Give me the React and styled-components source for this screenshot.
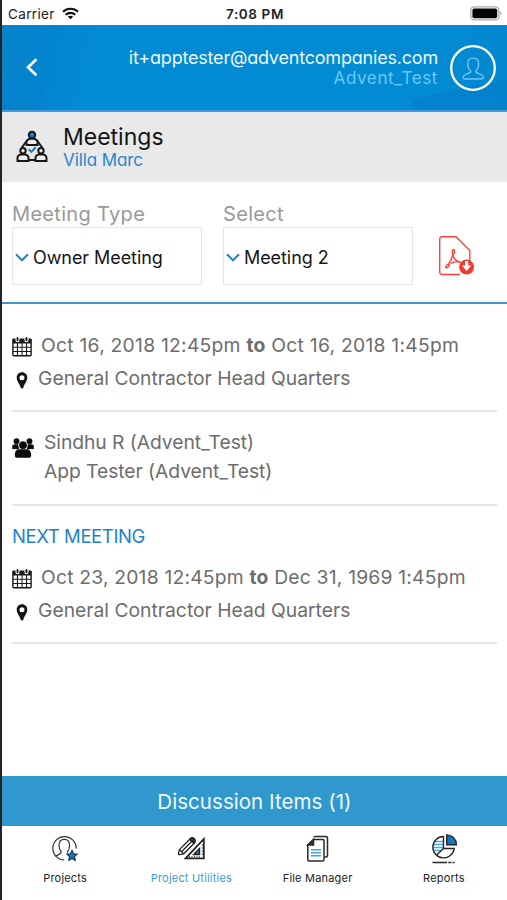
import React from "react";
import styled, { createGlobalStyle } from "styled-components";

const GlobalStyle = createGlobalStyle`
  * { box-sizing: border-box; }
  body { margin: 0; background: #fff; font-family: Inter, "Liberation Sans", sans-serif; }
`;

const Screen = styled.div`
  width: 507px;
  height: 900px;
  display: flex;
  flex-direction: column;
  overflow: hidden;
  background: #fff;
  border-left: 2px solid #232327;
`;

const StatusBar = styled.div`
  height: 25px;
  flex: none;
  display: grid;
  grid-template-columns: 1fr auto 1fr;
  align-items: center;
  padding: 2px 5px 0 6px;
  font-size: 13.5px;
  color: #222;
`;
const Carrier = styled.div`
  display: flex;
  align-items: center;
  gap: 7px;
  letter-spacing: 0.35px;
`;
const Clock = styled.div`
  font-weight: 600;
  letter-spacing: 0.6px;
`;
const BatterySlot = styled.div`
  display: flex;
  justify-content: flex-end;
`;

const Header = styled.header`
  height: 87px;
  flex: none;
  display: flex;
  align-items: center;
  padding: 0 11px 0 22px;
  border-bottom: 2px solid #429bd6;
  background:
    linear-gradient(168deg, transparent 45%, rgba(0, 100, 185, 0.22) 48%, rgba(0, 110, 195, 0.16)) 100% 100% / 94px 38px no-repeat,
    repeating-linear-gradient(105deg, rgba(0, 90, 190, 0.05) 0 3px, transparent 5px 9px) 0 0 / 45px 100% no-repeat,
    linear-gradient(100deg, #0683cb 0%, #0285cf 10%, #028bd3 19%, #028bd3 85%, #0288cf 100%);
`;
const Account = styled.div`
  margin-left: auto;
  margin-right: 12px;
  text-align: right;
  font-feature-settings: "cv11", "ss03";
`;
const Email = styled.div`
  font-size: 18px;
  line-height: 20px;
  letter-spacing: -0.2px;
  color: #eaf8ff;
`;
const Company = styled.div`
  font-size: 17.2px;
  line-height: 19px;
  letter-spacing: 0.5px;
  color: #65c9fb;
`;

const TitleBar = styled.section`
  height: 70px;
  flex: none;
  display: flex;
  padding: 0 0 0 14px;
  background: #e9e9e9;
`;
const TitleIcon = styled.div`
  padding-top: 18px;
  width: 47px;
`;
const TitleText = styled.div`
  padding-top: 11px;
  font-feature-settings: "cv11";
`;
const Title = styled.h1`
  margin: 0;
  font-size: 23px;
  line-height: 28px;
  font-weight: 400;
  color: #141414;
`;
const Subtitle = styled.div`
  font-size: 17px;
  line-height: 18px;
  letter-spacing: -0.1px;
  color: #2787cc;
`;

const Filters = styled.section`
  height: 122px;
  flex: none;
  display: flex;
  gap: 21px;
  padding: 19px 0 0 10px;
  border-bottom: 2px solid #4697cb;
`;
const Field = styled.div`
  width: 190px;
`;
const Label = styled.div`
  font-size: 20px;
  line-height: 26px;
  letter-spacing: 0.32px;
  color: #999;
`;
const SelectBox = styled.div`
  height: 58px;
  display: flex;
  align-items: center;
  gap: 4px;
  padding: 2px 0 0 2px;
  border: 1px solid #e6e6e6;
  font-size: 18px;
  letter-spacing: -0.07px;
  color: #161616;
`;
const PdfSlot = styled.div`
  padding: 34px 0 0 4px;
`;

const Details = styled.main`
  flex: 1;
  padding: 0 10px;
  color: #6d6d6d;
  font-size: 19.3px;
`;
const Block = styled.section`
  height: ${(p) => p.$height};
  padding-top: ${(p) => p.$top};
  border-bottom: 2px solid #e5e5e5;
`;
const Line = styled.div`
  display: flex;
  height: ${(p) => p.$height};
  line-height: ${(p) => p.$height};
`;
const Glyph = styled.div`
  width: ${(p) => p.$width};
  flex: none;
  display: flex;
  align-items: center;
  padding-left: ${(p) => p.$inset || "0"};
  padding-top: ${(p) => p.$drop || "0"};
`;
const Copy = styled.span`
  white-space: pre;
  letter-spacing: ${(p) => p.$track || "0"};
`;
const To = styled.b`
  font-weight: 700;
`;
const Heading = styled.h2`
  margin: 0;
  height: 38px;
  font-weight: 400;
  font-size: 18.5px;
  line-height: 26px;
  letter-spacing: -0.4px;
  color: #1d83c8;
`;

const DiscussionButton = styled.button`
  height: 50px;
  flex: none;
  border: 0;
  padding: 0;
  background: #3198cd;
  color: #eefaff;
  font-family: inherit;
  font-size: 20.5px;
  letter-spacing: 0.05px;
`;

const TabBar = styled.nav`
  height: 74px;
  flex: none;
  display: grid;
  grid-template-columns: repeat(4, 1fr);
`;
const Tab = styled.div`
  display: flex;
  flex-direction: column;
  align-items: center;
  padding-top: 8px;
  font-size: 11px;
  line-height: 14px;
  letter-spacing: 0.2px;
  color: ${(p) => (p.$active ? "#3b9bd8" : "#222")};
  svg { margin-bottom: 7px; }
`;

const Wifi = () => (
  <svg width="17" height="13" viewBox="0 0 17 13" fill="none" stroke="#111" strokeWidth="2.1">
    <path d="M1 4.8C5 .7 12 .7 16 4.8" />
    <path d="M3.7 7.7c2.7-2.5 6.9-2.5 9.6 0" />
    <path d="M8.5 12.2 5.8 9.6c1.6-1.3 3.8-1.3 5.4 0z" fill="#111" stroke="none" />
  </svg>
);
const Battery = () => (
  <svg width="32" height="15" viewBox="0 0 32 15">
    <rect x=".8" y=".8" width="28" height="13" rx="3.5" fill="#fff" stroke="#aaa" strokeWidth="1.3" />
    <rect x="2.4" y="2.4" width="24.8" height="9.8" rx="2" fill="#050505" />
    <path d="M30.3 5v4.6c1.6-.7 1.6-3.9 0-4.6z" fill="#999" />
  </svg>
);
const Back = () => (
  <svg width="14" height="20" viewBox="0 0 14 20" fill="none" stroke="#fff" strokeWidth="2.7">
    <path d="M12.400 1.200 4 9.200l8.400 8" />
  </svg>
);
const Avatar = () => (
  <svg width="46" height="46" viewBox="0 0 46 46" fill="none">
    <circle cx="23" cy="23" r="21.8" stroke="#fff" strokeWidth="2.3" />
    <path
      d="M20.5 25.500c-2-1.500-2.800-4-2.800-6.600 0-3.500 2.200-5.800 5.500-5.800s5.500 2.300 5.500 5.800c0 2.600-.8 5.100-2.800 6.600v1.700c2 1.700 7.500 2 7.500 5.300 0 1-.8 1.500-1.900 1.500H14.900c-1.100 0-1.900-.5-1.900-1.500 0-3.300 5.500-3.600 7.500-5.300z"
      stroke="#72c8f5"
      strokeWidth="1.300"
    />
  </svg>
);
const Team = () => (
  <svg width="32" height="33" viewBox="0 0 32 33" fill="none" stroke="#171717" strokeWidth="2">
    <path d="M11 10.500 5.500 18M21 10.500l5.500 7.500M12 30h8" />
    <circle cx="16" cy="5" r="3.200" fill="#1880c8" />
    <path d="M10.500 15v-2.500c0-2.500 2-3.500 4-3.800h3c2 .3 4 1.300 4 3.800V15z" fill="#eee" />
    <circle cx="7" cy="20.800" r="2.700" fill="#eee" />
    <circle cx="25" cy="20.800" r="2.700" fill="#eee" />
    <path d="M1.500 31v-2.800c0-2.300 1.700-3.500 3.700-3.700h3.600c2 .2 3.700 1.400 3.700 3.700V31z" fill="#eee" />
    <path d="M19.500 31v-2.800c0-2.300 1.700-3.500 3.700-3.700h3.600c2 .2 3.700 1.400 3.700 3.700V31z" fill="#eee" />
    <path d="m12.700 19.300 2.700 2.600 4.400-4.600" stroke="#1880c8" />
  </svg>
);
const Chevron = () => (
  <svg width="14" height="9" viewBox="0 0 14 9" fill="none" stroke="#2383c8" strokeWidth="2">
    <path d="m1 1.300 6 6 6-6" />
  </svg>
);
const Pdf = () => (
  <svg width="37" height="42" viewBox="0 0 37 42" fill="none" stroke="#ff4239" strokeWidth="1.400">
    <path d="M22 39.500H4.200c-1.500 0-2.500-1-2.500-2.500V4.200c0-1.500 1-2.500 2.500-2.500H18L31.800 15.500v10" />
    <path d="M14.800 19.500c1 4 3.900 7.200 7.600 8.100M14.900 19c-.8 4.500-2.700 8-4.700 10.700M12.500 28.300c3-1.300 6.500-2 10-1.900" />
    <ellipse cx="15.400" cy="16.700" rx="1.100" ry="2.200" />
    <ellipse cx="9.500" cy="31" rx="1.100" ry="2.300" transform="rotate(48 9.500 31)" />
    <circle cx="28.600" cy="32" r="7.500" fill="#f5372f" stroke="none" />
    <path d="M27 26h3.200v4.500h3l-4.600 5.600-4.600-5.600h3z" fill="#fff" stroke="none" />
  </svg>
);
const CalendarIcon = () => (
  <svg width="20" height="21" viewBox="0 0 20 21">
    <path d="M1.500 2.500h17q1.300 0 1.300 1.300v15q0 1.700-1.700 1.700H1.900Q.2 20.500.2 18.800v-15q0-1.300 1.300-1.300z" fill="#171717" />
    <path
      d="M1.600 7.500h3.300v3.200H1.600zm4.400 0h3.500v3.200H6zm4.500 0H14v3.200h-3.500zm4.600 0h3.300v3.200h-3.300zM1.600 11.800h3.300V15H1.600zm4.400 0h3.500V15H6zm4.500 0H14V15h-3.500zm4.600 0h3.300V15h-3.300zM1.600 16.100h3.300v3H1.600zm4.400 0h3.500v3H6zm4.500 0H14v3h-3.500zm4.600 0h3.300v3h-3.300z"
      fill="#fff"
    />
    <g fill="#171717" stroke="#fff" strokeWidth="1.100">
      <rect x="4" y=".4" width="3" height="5.300" rx="1.400" />
      <rect x="13" y=".4" width="3" height="5.300" rx="1.400" />
    </g>
  </svg>
);
const Pin = () => (
  <svg width="12" height="17" viewBox="0 0 12 17">
    <path fillRule="evenodd" d="M6 .3c3.100 0 5.300 2.300 5.300 5.400C11.300 9 8.500 11.500 7.400 15.500 7 16.900 5 16.900 4.600 15.500 3.500 11.500.7 9 .7 5.700.7 2.600 2.900.3 6 .3zm0 2.900a2.500 2.500 0 1 0 0 5 2.500 2.500 0 0 0 0-5z" fill="#111" />
  </svg>
);
const People = () => (
  <svg width="22" height="20" viewBox="0 0 22 20" fill="#0c0c0c">
    <circle cx="4.500" cy="3.200" r="2.900" />
    <circle cx="17.500" cy="3.200" r="2.900" />
    <path d="M.2 11V8.600C.2 7 1.200 6.200 3 6.200h3.200l1 5zM21.800 11V8.600c0-1.600-1-2.400-2.800-2.400h-3.200l-1 5z" />
    <circle cx="11" cy="7.200" r="4.300" stroke="#fff" strokeWidth=".6" />
    <path d="M2.800 17c0-3.700 1.700-5.700 4.400-5.700h7.600c2.700 0 4.400 2 4.400 5.700 0 2-.9 2.800-2.700 2.800h-11c-1.800 0-2.700-.8-2.700-2.800z" />
  </svg>
);
const ProjectsIcon = () => (
  <svg width="28" height="30" viewBox="0 0 28 30" fill="none" stroke="#333" strokeWidth="1.200">
    <path d="M25.200 14.500a11.700 11.700 0 1 0-12 11.500" />
    <path d="M4.500 22.600c1-2 5.700-1.700 5.700-5.100-1.600-1.500-2.200-3.500-2.200-6.200 0-4.200 1.800-6 5.300-6s5.300 1.800 5.300 6c0 2.400-.5 4.500-2 6.100v1.900" />
    <path d="m21 16.500 1.500 3.300 3.600.4-2.700 2.400.8 3.600-3.200-1.800-3.200 1.800.8-3.600-2.700-2.400 3.600-.4z" fill="#1677bb" stroke="#14344d" />
  </svg>
);
const UtilitiesIcon = () => (
  <svg width="28" height="30" viewBox="0 0 28 30" fill="none" stroke="#222" strokeWidth="1.300">
    <path d="M2.400 15.600 12.800 5.200l4.200 4.200L6.600 19.800l-3.900.9q-1.300.1-1.200-1.200z" fill="#fff" />
    <path d="M4.500 17.700 14.900 7.300M2.400 15.600l4.200 4.200" />
    <path d="m12.800 5.200 1.300-1.300c2.300-1.200 5.200 1.700 4 4.100L17 9.400z" fill="#123a5c" />
    <path d="M26.800 5v19.300H8.600z" fill="#fff" strokeWidth="1.800" />
    <path d="M22.500 14.500v6h-5.800z" fill="#2679b4" strokeWidth="1.400" />
    <path d="M12.500 22v1.500M15 22v1.500M17.500 22v1.500M20 22v1.500M22.500 22v1.500M24.500 11h1.500M24.500 14h1.500M24.500 17h1.500M24.500 20h1.500" strokeWidth=".8" />
  </svg>
);
const FilesIcon = () => (
  <svg width="28" height="30" viewBox="0 0 28 30" fill="none" stroke="#292929" strokeWidth="1.500">
    <path d="M10 3.600q0-1.200 1.200-1.200h10.600q1.700 0 1.700 1.700v17.500q0 1.500-1.500 1.500h-1.500" />
    <path d="M9.500 5.500h9q1.500 0 1.500 1.500v18.500q0 1.500-1.500 1.500H5.300q-1.500 0-1.500-1.500V11z" fill="#fff" />
    <path d="M9.500 5.500V11H3.800z" fill="#154d7b" />
    <path d="M7 15.800h10M7 18.800h10M7 21.800h10" stroke="#49a1da" />
  </svg>
);
const ReportsIcon = () => (
  <svg width="28" height="30" viewBox="0 0 28 30" fill="none" stroke="#262626" strokeWidth="1.400">
    <path d="M4.600 7.500H13M3.500 10.500H13M3.500 13.500H13M4 16.500h7" stroke="#4da6df" />
    <path d="M13.500 2.500A10.700 10.700 0 1 0 24.200 14.500H13.500zM13.500 14.500 6 21.500" />
    <path d="M16.700.9V10.800h9.700C26.200 5 22.900 1.400 16.700.9z" fill="#1478bd" />
    <path d="M2.500 28.500h14.500M18.300 28.500h3M22.500 28.500h2" />
  </svg>
);

const TABS = [
  { label: "Projects", Icon: ProjectsIcon },
  { label: "Project Utilities", Icon: UtilitiesIcon, active: true },
  { label: "File Manager", Icon: FilesIcon },
  { label: "Reports", Icon: ReportsIcon },
];

function Schedule({ from, to, track }) {
  return (
    <>
      <Line $height="33px">
        <Glyph $width="29px" $drop="2px"><CalendarIcon /></Glyph>
        <Copy $track={track}>{from} <To>to</To> {to}</Copy>
      </Line>
      <Line $height="33px">
        <Glyph $width="26px" $inset="4px" $drop="3px"><Pin /></Glyph>
        <Copy>General Contractor Head Quarters</Copy>
      </Line>
    </>
  );
}

export default function App() {
  return (
    <Screen>
      <GlobalStyle />
      <StatusBar>
        <Carrier>Carrier <Wifi /></Carrier>
        <Clock>7:08 PM</Clock>
        <BatterySlot><Battery /></BatterySlot>
      </StatusBar>
      <Header>
        <Back />
        <Account>
          <Email>it+apptester@adventcompanies.com</Email>
          <Company>Advent_Test</Company>
        </Account>
        <Avatar />
      </Header>
      <TitleBar>
        <TitleIcon><Team /></TitleIcon>
        <TitleText>
          <Title>Meetings</Title>
          <Subtitle>Villa Marc</Subtitle>
        </TitleText>
      </TitleBar>
      <Filters>
        <Field>
          <Label>Meeting Type</Label>
          <SelectBox><Chevron />Owner Meeting</SelectBox>
        </Field>
        <Field>
          <Label>Select</Label>
          <SelectBox><Chevron />Meeting 2</SelectBox>
        </Field>
        <PdfSlot><Pdf /></PdfSlot>
      </Filters>
      <Details>
        <Block $height="108px" $top="25px">
          <Schedule from="Oct 16, 2018 12:45pm" to="Oct 16, 2018 1:45pm" track="0.25px" />
        </Block>
        <Block $height="94px" $top="16px">
          <Line $height="29px">
            <Glyph $width="32px" $drop="11px"><People /></Glyph>
            <Copy $track="-0.06px">Sindhu R (Advent_Test)</Copy>
          </Line>
          <Line $height="29px">
            <Glyph $width="32px" />
            <Copy $track="-0.06px">App Tester (Advent_Test)</Copy>
          </Line>
        </Block>
        <Block $height="138px" $top="17px">
          <Heading>NEXT MEETING</Heading>
          <Schedule from="Oct 23, 2018 12:45pm" to="Dec 31, 1969 1:45pm" track="0.2px" />
        </Block>
      </Details>
      <DiscussionButton>Discussion Items (1)</DiscussionButton>
      <TabBar>
        {TABS.map(({ label, Icon, active }) => (
          <Tab key={label} $active={active}><Icon />{label}</Tab>
        ))}
      </TabBar>
    </Screen>
  );
}
